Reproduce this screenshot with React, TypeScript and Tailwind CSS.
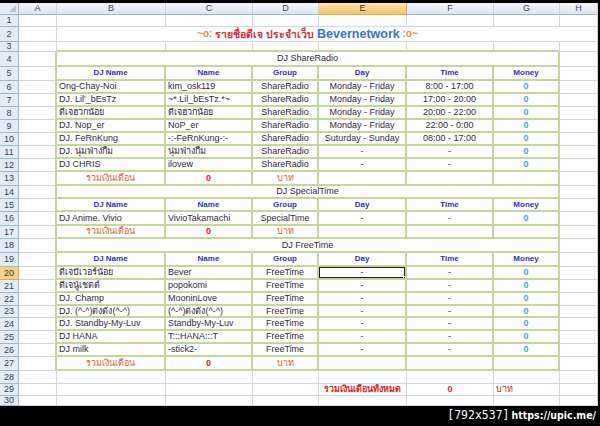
import clsx from 'clsx'

const GRID = 'grid grid-cols-[19px_38px_109px_87px_66px_88px_87px_66px_38px]'
const line = 'border-r border-b border-[#d0d7e5]'
const box = 'border-r-2 border-b-2 border-[#c4d79b]'
const ink = 'text-[#2f2b3d]'

type Row =
  | { h: string; kind: 'blank' | 'title' | 'edge' | 'head' | 'sum' | 'total' }
  | { h: string; kind: 'section'; text: string }
  | { h: string; kind: 'data'; cells: string[] }

const rows: Row[] = [
  { h: 'h-[12px]', kind: 'blank' },
  { h: 'h-[15px]', kind: 'title' },
  { h: 'h-[10px]', kind: 'edge' },
  { h: 'h-[15px]', kind: 'section', text: 'DJ ShareRadio' },
  { h: 'h-[14px]', kind: 'head' },
  { h: 'h-[13px]', kind: 'data', cells: ['Ong-Chay-Noi', 'kim_osk119', 'ShareRadio', 'Monday - Friday', '8:00 - 17:00'] },
  { h: 'h-[13px]', kind: 'data', cells: ["DJ. Lil'_bEsTz", '~*.Lil_bEsTz.*~', 'ShareRadio', 'Monday - Friday', '17:00 - 20:00'] },
  { h: 'h-[13px]', kind: 'data', cells: ['ดีเจฮวกน้อย', 'ดีเจฮวกน้อย', 'ShareRadio', 'Monday - Friday', '20:00 - 22:00'] },
  { h: 'h-[13px]', kind: 'data', cells: ['DJ. Nop_er', 'NoP_er', 'ShareRadio', 'Monday - Friday', '22:00 - 0:00'] },
  { h: 'h-[13px]', kind: 'data', cells: ['DJ. FeRnKung', '-:-FeRnKung-:-', 'ShareRadio', 'Suturday - Sunday', '08:00 - 17:00'] },
  { h: 'h-[13px]', kind: 'data', cells: ['DJ. นุ่มฟ่างกึ้ม', 'นุ่มฟ่างกึ้ม', 'ShareRadio', '-', '-'] },
  { h: 'h-[13px]', kind: 'data', cells: ['DJ CHRIS', 'ilovew', 'ShareRadio', '-', '-'] },
  { h: 'h-[14px]', kind: 'sum' },
  { h: 'h-[13px]', kind: 'section', text: 'DJ SpecialTime' },
  { h: 'h-[13px]', kind: 'head' },
  { h: 'h-[14px]', kind: 'data', cells: ['DJ Anime. Vivio', 'VivioTakamachi', 'SpecialTime', '-', '-'] },
  { h: 'h-[13px]', kind: 'sum' },
  { h: 'h-[14px]', kind: 'section', text: 'DJ FreeTime' },
  { h: 'h-[14px]', kind: 'head' },
  { h: 'h-[13px]', kind: 'data', cells: ['ดีเจบีเวอร์น้อย', 'Bever', 'FreeTime', '-', '-'] },
  { h: 'h-[13px]', kind: 'data', cells: ['ดีเจนู๋เชตต์', 'popokomi', 'FreeTime', '-', '-'] },
  { h: 'h-[13px]', kind: 'data', cells: ['DJ. Champ', 'MooninLove', 'FreeTime', '-', '-'] },
  { h: 'h-[12px]', kind: 'data', cells: ['DJ. (^-^)ต่งตั๋ง(^-^)', '(^-^)ต่งตั๋ง(^-^)', 'FreeTime', '-', '-'] },
  { h: 'h-[13px]', kind: 'data', cells: ['DJ. Standby-My-Luv', 'Standby-My-Luv', 'FreeTime', '-', '-'] },
  { h: 'h-[13px]', kind: 'data', cells: ['DJ HANA', 'T:::HANA:::T', 'FreeTime', '-', '-'] },
  { h: 'h-[13px]', kind: 'data', cells: ['DJ milk', '-stick2-', 'FreeTime', '-', '-'] },
  { h: 'h-[14px]', kind: 'sum' },
  { h: 'h-[13px]', kind: 'blank' },
  { h: 'h-[12px]', kind: 'total' },
  { h: 'h-[10px]', kind: 'blank' },
]

const heads = ['DJ Name', 'Name', 'Group', 'Day', 'Time', 'Money']

function C({ className, children }: { className?: string; children?: React.ReactNode }) {
  return (
    <div className={clsx('flex items-center overflow-hidden whitespace-nowrap leading-none', className)}>
      {children}
    </div>
  )
}

function RowHead({ n }: { n: number }) {
  const on = n === 20
  return (
    <C
      className={clsx(
        'justify-center border-r border-b text-[9px]',
        on
          ? 'bg-[#f7d28a] border-[#e7a84a] text-[#3c3320]'
          : 'bg-[#e4ecf7] border-[#9eb6ce] text-[#34465c]',
      )}
    >
      {n}
    </C>
  )
}

function Line({ row, n }: { row: Row; n: number }) {
  const inTable = n >= 4 && n <= 27
  const a = <C className={clsx(inTable ? 'border-r-2 border-b border-r-[#c4d79b] border-b-[#d0d7e5]' : line)} />
  let mid: React.ReactNode

  if (row.kind === 'title') {
    mid = (
      <C className="col-span-6 justify-center font-bold text-[12.5px] border-b border-[#d0d7e5] pr-[2px]">
        <span className="text-[#f08a3c] text-[10px] whitespace-pre">~o: </span>
        <span className="text-[#d6303f] text-[10.5px] whitespace-pre">รายชื่อดีเจ ประจำเว็บ </span>
        <span className="text-[#3f6fe0]">Bevernetwork</span>
        <span className="text-[#f08a3c] text-[10px] whitespace-pre"> :o~</span>
      </C>
    )
  } else if (row.kind === 'section') {
    mid = <C className={clsx('col-span-6 justify-center text-[9px]', box, ink)}>{row.text}</C>
  } else if (row.kind === 'head') {
    mid = heads.map((t) => (
      <C key={t} className={clsx('justify-center font-bold text-[8px] text-[#2f2fce]', box)}>
        {t}
      </C>
    ))
  } else if (row.kind === 'data') {
    mid = (
      <>
        <C className={clsx('pl-[2px] text-[9px]', box, ink)}>{row.cells[0]}</C>
        <C className={clsx('pl-[2px] text-[9px]', box, ink)}>{row.cells[1]}</C>
        <C className={clsx('justify-center text-[9px]', box, ink)}>{row.cells[2]}</C>
        <C className={clsx('relative justify-center text-[9px]', box, ink)}>
          {row.cells[3]}
          {n === 20 && (
            <>
              <span className="absolute -left-[1px] -top-[1px] -right-[1px] -bottom-[1px] border-2 border-[#1c1830]" />
              <span className="absolute -right-[3px] -bottom-[3px] w-[5px] h-[5px] bg-[#1c1830] border border-white" />
            </>
          )}
        </C>
        <C className={clsx('justify-center text-[9px]', box, ink)}>{row.cells[4]}</C>
        <C className={clsx('justify-center font-bold text-[9px] text-[#4aa3df]', box)}>0</C>
      </>
    )
  } else if (row.kind === 'sum') {
    mid = (
      <>
        <C className={clsx('justify-center text-[9px] text-[#e0632e]', box)}>รวมเงินเดือน</C>
        <C className={clsx('justify-center font-bold text-[9px] text-[#e02424]', box)}>0</C>
        <C className={clsx('justify-center text-[9px] text-[#e0632e]', box)}>บาท</C>
        <C className={box} />
        <C className={box} />
        <C className={box} />
      </>
    )
  } else if (row.kind === 'total') {
    mid = (
      <>
        <C className={line} />
        <C className={line} />
        <C className={line} />
        <C className={clsx('justify-center font-bold text-[9px] text-[#e01f1f]', line)}>รวมเงินเดือนทั้งหมด</C>
        <C className={clsx('justify-center font-bold text-[9px] text-[#e01f1f]', line)}>0</C>
        <C className={clsx('pl-[2px] text-[9px] text-[#e01f1f]', line)}>บาท</C>
      </>
    )
  } else {
    const edge = row.kind === 'edge'
    mid = [0, 1, 2, 3, 4, 5].map((i) => (
      <C
        key={i}
        className={clsx(
          'border-r border-r-[#d0d7e5]',
          edge ? 'border-b-2 border-b-[#c4d79b]' : 'border-b border-b-[#d0d7e5]',
        )}
      />
    ))
  }

  return (
    <div className={clsx(GRID, row.h)}>
      <RowHead n={n} />
      {a}
      {mid}
      <C className={line} />
    </div>
  )
}

export default function App() {
  const letters = ['A', 'B', 'C', 'D', 'E', 'F', 'G', 'H']
  return (
    <div className="w-[600px] h-[426px] bg-black overflow-hidden font-['Liberation_Sans',Tahoma,sans-serif]">
      <div className="h-[3px]" />
      <div className="flex">
        <div className="w-[598px] h-[403px] bg-white overflow-hidden">
          {/* column headers */}
          <div className={clsx(GRID, 'h-[12px]')}>
            <div className="relative bg-[#e4ecf7] border-r border-b border-[#9eb6ce]">
              <svg className="absolute right-[2px] bottom-[2px]" width="7" height="7" viewBox="0 0 7 7">
                <path d="M7 0 L7 7 L0 7 Z" fill="#b6c6da" />
              </svg>
            </div>
            {letters.map((l) => (
              <C
                key={l}
                className={clsx(
                  'justify-center text-[9px] border-r border-b',
                  l === 'E'
                    ? 'bg-gradient-to-b from-[#fbe3b0] to-[#f5c46c] border-[#e7a84a] text-[#3c3320]'
                    : 'bg-gradient-to-b from-[#f3f6fb] to-[#dde6f2] border-r-[#c5d2e2] border-b-[#9eb6ce] text-[#34465c]',
                )}
              >
                {l}
              </C>
            ))}
          </div>
          {rows.map((r, i) => (
            <Line key={i} row={r} n={i + 1} />
          ))}
        </div>
      </div>
      {/* watermark strip */}
      <div className="h-[20px] flex items-center justify-end pr-[4px] text-white gap-[2px]">
        <span className="font-['DejaVu_Sans_Mono',monospace] text-[11.5px]">[792x537]</span>
        <span className="font-['DejaVu_Sans_Condensed','DejaVu_Sans',sans-serif] font-bold text-[10.5px]">https://upic.me/</span>
      </div>
    </div>
  )
}
